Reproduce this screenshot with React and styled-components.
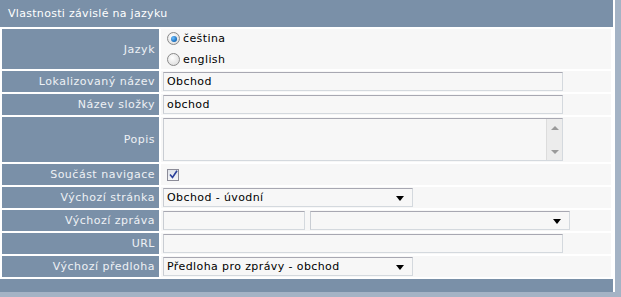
import React from "react";
import styled, { createGlobalStyle } from "styled-components";

const GlobalStyle = createGlobalStyle`
  html, body {
    margin: 0;
    padding: 0;
    background: #a4b3c5;
  }
  body {
    font-family: "DejaVu Sans", Verdana, sans-serif;
    font-size: 11px;
  }
`;

const Page = styled.div`
  width: 621px;
  height: 297px;
  background: #a4b3c5;
  overflow: hidden;
`;

const Frame = styled.div`
  width: 615px;
  height: 292px;
  background: #ffffff;
`;

const Panel = styled.div`
  width: 613px;
  height: 292px;
  display: flex;
  flex-direction: column;
  background: #ffffff;
`;

const Header = styled.div`
  height: 27px;
  background: #7a90a8;
  color: #ffffff;
  padding-left: 8px;
  display: flex;
  align-items: center;
  font-size: 11px;
  letter-spacing: 0.3px;
`;

const Grid = styled.div`
  display: grid;
  grid-template-columns: 157px 1fr;
  gap: 2px;
  padding: 2px;
`;

const Label = styled.div`
  height: ${(p) => p.h}px;
  background: #7a90a8;
  color: #eef1f5;
  display: flex;
  align-items: center;
  justify-content: flex-end;
  padding-right: 4px;
  font-size: 11px;
  letter-spacing: 0.5px;
`;

const Value = styled.div`
  height: ${(p) => p.h}px;
  background: #f7f7f7;
  display: flex;
  align-items: center;
  gap: 5px;
  padding-left: 2px;
`;

const Footer = styled.div`
  height: 13px;
  background: #7a90a8;
`;

const TextBox = styled.div`
  box-sizing: border-box;
  width: ${(p) => p.w}px;
  height: 19px;
  background: #f7f7f7;
  border: 1px solid #d4d9de;
  border-top-color: #a8a8b2;
  border-left-color: #c9cdd3;
  color: #000;
  font-size: 11px;
  padding-left: 3px;
  display: flex;
  align-items: center;
  letter-spacing: 0.4px;
`;

const SelectBox = styled(TextBox)`
  position: relative;
  padding-right: 16px;
`;

const Arrow = styled.span`
  position: absolute;
  right: 8px;
  top: 7px;
  width: 0;
  height: 0;
  border-left: 4px solid transparent;
  border-right: 4px solid transparent;
  border-top: 5px solid #000;
`;

const TextArea = styled.div`
  box-sizing: border-box;
  width: 400px;
  height: 43px;
  background: #f7f7f7;
  border: 1px solid #d4d9de;
  border-top-color: #a8a8b2;
  border-left-color: #c9cdd3;
  display: flex;
  justify-content: flex-end;
`;

const ScrollTrack = styled.div`
  width: 15px;
  background: #ececec;
  border-left: 1px solid #dcdcdc;
  display: flex;
  flex-direction: column;
  justify-content: space-between;
  align-items: center;
  padding: 7px 0 6px;
`;

const ScrollArrow = styled.span`
  width: 0;
  height: 0;
  border-left: 4px solid transparent;
  border-right: 4px solid transparent;
  ${(p) =>
    p.up
      ? "border-bottom: 4px solid #9a9a9a;"
      : "border-top: 4px solid #9a9a9a;"}
`;

const RadioGroup = styled.div`
  display: flex;
  flex-direction: column;
  gap: 8px;
  padding-left: 4px;
`;

const RadioRow = styled.div`
  display: flex;
  align-items: center;
  gap: 3px;
  color: #000;
  font-size: 11px;
  letter-spacing: 0.4px;
`;

const RadioDot = styled.span`
  box-sizing: border-box;
  width: 13px;
  height: 13px;
  border-radius: 50%;
  border: 1px solid #8a8a8a;
  background: radial-gradient(circle at 40% 35%, #ffffff 0%, #d6d6d6 100%);
  display: flex;
  align-items: center;
  justify-content: center;
  &::after {
    content: "";
    display: ${(p) => (p.checked ? "block" : "none")};
    width: 6px;
    height: 6px;
    border-radius: 50%;
    background: radial-gradient(circle at 35% 35%, #6ec0ff 0%, #0a5fb0 80%);
  }
`;

const CheckBox = styled.span`
  box-sizing: border-box;
  width: 12px;
  height: 12px;
  margin-left: 4px;
  border: 1px solid #8c8c98;
  background: linear-gradient(#dfe3ea, #f4f5f7);
  display: flex;
  align-items: center;
  justify-content: center;
`;

function Row({ label, h, children }) {
  return (
    <>
      <Label h={h}>{label}</Label>
      <Value h={h}>{children}</Value>
    </>
  );
}

export default function App() {
  return (
    <Page>
      <GlobalStyle />
      <Frame>
        <Panel>
          <Header>Vlastnosti závislé na jazyku</Header>
          <Grid>
            <Row label="Jazyk" h={40}>
              <RadioGroup>
                <RadioRow>
                  <RadioDot checked />
                  čeština
                </RadioRow>
                <RadioRow>
                  <RadioDot />
                  english
                </RadioRow>
              </RadioGroup>
            </Row>
            <Row label="Lokalizovaný název" h={21}>
              <TextBox w={400}>Obchod</TextBox>
            </Row>
            <Row label="Název složky" h={21}>
              <TextBox w={400}>obchod</TextBox>
            </Row>
            <Row label="Popis" h={45}>
              <TextArea>
                <ScrollTrack>
                  <ScrollArrow up />
                  <ScrollArrow />
                </ScrollTrack>
              </TextArea>
            </Row>
            <Row label="Součást navigace" h={21}>
              <CheckBox>
                <svg width="9" height="9" viewBox="0 0 9 9">
                  <path
                    d="M1 4.5 L3.5 7.5 L8 0.8"
                    fill="none"
                    stroke="#2a3f9a"
                    strokeWidth="1.6"
                  />
                </svg>
              </CheckBox>
            </Row>
            <Row label="Výchozí stránka" h={21}>
              <SelectBox w={250}>
                Obchod - úvodní
                <Arrow />
              </SelectBox>
            </Row>
            <Row label="Výchozí zpráva" h={21}>
              <TextBox w={142} />
              <SelectBox w={260}>
                <Arrow />
              </SelectBox>
            </Row>
            <Row label="URL" h={21}>
              <TextBox w={400} />
            </Row>
            <Row label="Výchozí předloha" h={21}>
              <SelectBox w={250}>
                Předloha pro zprávy - obchod
                <Arrow />
              </SelectBox>
            </Row>
          </Grid>
          <Footer />
        </Panel>
      </Frame>
    </Page>
  );
}
